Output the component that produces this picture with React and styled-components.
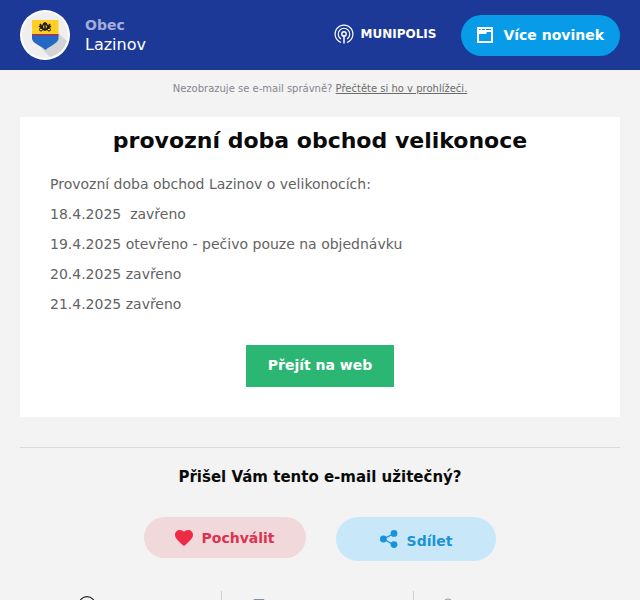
import React from "react";
import styled, { createGlobalStyle } from "styled-components";

const schedule = [
  "18.4.2025\u00a0 zavřeno",
  "19.4.2025 otevřeno - pečivo pouze na objednávku",
  "20.4.2025 zavřeno",
  "21.4.2025 zavřeno",
];

const CrestIcon = () => (
  <svg width="50" height="50" viewBox="0 0 50 50" role="img" aria-label="Lazinov">
    <circle cx="25" cy="25" r="25" fill="#fff" />
    <circle cx="25" cy="25" r="23" fill="#efefef" />
    <path d="M38 23 L47 31 A23 23 0 0 1 30 47 L22 39 Z" fill="#d3d4d6" />
    <path d="M12 10 H38.5 V25 H12 Z" fill="#ffcf24" />
    <path d="M12 25 H38.5 V29 C37 34 31 35 25.5 40 C20 35 13.5 34 12 29 Z" fill="#2468c4" />
    <path d="M12 24 H38.5 V25.5 H12 Z" fill="#b0304a" />
    <path
      d="M25 21 V12 M24 20 L20 14 M26 20 L30 14 M23 19 L19 16 M27 19 L31 16 M22 17 L24 13 M28 17 L26 13"
      stroke="#1b1a16"
      strokeWidth="1.5"
      fill="none"
    />
    <circle cx="21" cy="19.5" r="1.5" fill="none" stroke="#1b1a16" />
    <circle cx="29" cy="19.5" r="1.5" fill="none" stroke="#1b1a16" />
  </svg>
);

const SignalIcon = () => (
  <svg width="20" height="20" viewBox="0 0 20 20" fill="none" stroke="#fff" strokeWidth="1.2" aria-hidden="true">
    <path d="M7 18.4 A8.9 8.9 0 1 1 13 18.4" />
    <path d="M7 15 A5.8 5.8 0 1 1 13 15" />
    <circle cx="10" cy="10" r="2.2" strokeWidth="1.4" />
    <path d="M10 11 V19.5" strokeWidth="1.5" />
  </svg>
);

const NewsIcon = () => (
  <svg width="16" height="16" viewBox="0 0 16 16" aria-hidden="true">
    <path
      fillRule="evenodd"
      fill="#fff"
      d="M0 0 H16 V16 H0 Z M2 2 V3 H3.5 V2 Z M5 2 V3 H8 V2 Z M9 2 V3 H14 V2 Z M2 7 V14 H14 V5 H10 L9 7 Z"
    />
  </svg>
);

const HeartIcon = () => (
  <svg width="18" height="16" viewBox="0 0 18 16" aria-hidden="true">
    <path
      fill="#ed2b46"
      d="M9 16 L7.7 14.9 C3.1 10.9 0 8.2 0 4.8 C0 2.1 2.2 0 4.9 0 C6.5 0 8 .7 9 1.9 C10 .7 11.5 0 13.1 0 C15.8 0 18 2.1 18 4.8 C18 8.2 14.9 10.9 10.3 14.9 Z"
    />
  </svg>
);

const ShareIcon = () => (
  <svg width="18" height="18" viewBox="0 0 18 18" aria-hidden="true">
    <path d="M14 3.5 L3.5 9 L14 15" stroke="#1593dc" strokeWidth="1.3" fill="none" />
    <circle cx="14" cy="3.4" r="3.4" fill="#1593dc" />
    <circle cx="3.4" cy="9" r="3.4" fill="#1593dc" />
    <circle cx="14" cy="14.6" r="3.4" fill="#1593dc" />
  </svg>
);

const GlobeIcon = () => (
  <svg width="18" height="18" viewBox="0 0 18 18" fill="none" stroke="#222" aria-hidden="true">
    <circle cx="9" cy="9" r="8.3" strokeWidth="1.3" />
    <path d="M4 9 H14 M9 5 V13" />
  </svg>
);

const PhoneIcon = () => (
  <svg width="12" height="18" viewBox="0 0 12 18" fill="none" stroke="#8a8ca8" aria-hidden="true">
    <path d="M1 3.5 H11 V17 H1 Z M5 15 H7" />
  </svg>
);

const PinIcon = () => (
  <svg width="12" height="18" viewBox="0 0 12 18" fill="none" stroke="#8f9098" aria-hidden="true">
    <path d="M6 17 C3 12 1 10 1 8 A5 5 0 0 1 11 8 C11 10 9 12 6 17 Z" />
    <circle cx="6" cy="8" r="1.5" />
  </svg>
);

export default function App() {
  return (
    <>
      <GlobalStyle />
      <Header>
        <Municipality>
          <CrestIcon />
          <div>
            <Kind>Obec</Kind>
            <Name>Lazinov</Name>
          </div>
        </Municipality>
        <Brand>
          <SignalIcon />
          MUNIPOLIS
        </Brand>
        <NewsLink href="#novinky">
          <NewsIcon />
          Více novinek
        </NewsLink>
      </Header>
      <Notice>
        Nezobrazuje se e-mail správně? <a href="#prohlizec">Přečtěte si ho v prohlížeči.</a>
      </Notice>
      <Content>
        <Card>
          <Title>provozní doba obchod velikonoce</Title>
          <Message>
            <p>Provozní doba obchod Lazinov o velikonocích:</p>
            {schedule.map((line) => (
              <p key={line}>{line}</p>
            ))}
          </Message>
          <WebLink href="#web">Přejít na web</WebLink>
        </Card>
        <Feedback>
          <Question>Přišel Vám tento e-mail užitečný?</Question>
          <Actions>
            <Pill type="button" $bg="#f1d8da" $color="#dc3350" $space="31px">
              <HeartIcon />
              Pochválit
            </Pill>
            <Pill type="button" $bg="#c8e8f9" $color="#1c93d4" $space="44px" $tall>
              <ShareIcon />
              <span>Sdílet</span>
            </Pill>
          </Actions>
        </Feedback>
        <Contacts>
          <Contact $indent="58px">
            <GlobeIcon />
          </Contact>
          <Contact $indent="31px">
            <PhoneIcon />
          </Contact>
          <Contact $indent="28px">
            <PinIcon />
          </Contact>
        </Contacts>
      </Content>
    </>
  );
}

const GlobalStyle = createGlobalStyle`
  body {
    margin: 0;
    background-color: #f3f3f3;
    font-family: "DejaVu Sans", sans-serif;
    font-size: 14px;
  }
  * {
    box-sizing: border-box;
  }
  svg {
    display: block;
    flex-shrink: 0;
  }
`;

const Header = styled.header`
  display: flex;
  align-items: center;
  padding: 10px 20px;
  background-color: #1c3997;
  color: #fff;
`;

const Municipality = styled.div`
  display: flex;
  align-items: center;
  gap: 15px;
  margin-right: auto;
`;

const Kind = styled.div`
  color: #a3addb;
  font-weight: bold;
  line-height: 20px;
`;

const Name = styled.div`
  font-size: 16px;
  line-height: 20px;
`;

const Brand = styled.div`
  display: flex;
  align-items: center;
  gap: 6px;
  margin-right: 25px;
  padding-bottom: 2px;
  font-size: 12px;
  font-weight: bold;
`;

const NewsLink = styled.a`
  display: flex;
  align-items: center;
  gap: 10px;
  padding: 12px 16px;
  border-radius: 21px;
  background-color: #089ce8;
  color: #fff;
  font-weight: bold;
  line-height: 17px;
  text-decoration: none;
`;

const Notice = styled.p`
  margin: 0;
  padding: 12px 20px 22px;
  color: #85858f;
  font-size: 10px;
  line-height: 13px;
  text-align: center;
  a {
    color: #6b6b6b;
  }
`;

const Content = styled.main`
  padding: 0 20px;
`;

const Card = styled.article`
  display: flex;
  flex-direction: column;
  align-items: center;
  padding: 8px 30px 30px;
  background-color: #fff;
`;

const Title = styled.h1`
  margin: 0 0 13px;
  color: #0a0a0a;
  font-size: 22px;
  line-height: 31px;
  text-align: center;
`;

const Message = styled.div`
  align-self: stretch;
  margin-bottom: 26px;
  color: #636363;
  line-height: 30px;
  p {
    margin: 0;
  }
`;

const WebLink = styled.a`
  padding: 10px 22px 12px;
  background-color: #2bb673;
  color: #fff;
  font-weight: bold;
  line-height: 20px;
  text-decoration: none;
`;

const Feedback = styled.section`
  margin-top: 30px;
  border-top: 1px solid #dadada;
  padding: 18px 0 30px;
`;

const Question = styled.h2`
  margin: 0 0 29px;
  color: #0a0a0a;
  font-size: 15px;
  line-height: 22px;
  text-align: center;
`;

const Actions = styled.div`
  display: flex;
  align-items: flex-start;
  justify-content: center;
  gap: 30px;
`;

const Pill = styled.button`
  display: flex;
  align-items: center;
  justify-content: center;
  gap: 9px;
  height: ${({ $tall }) => ($tall ? "44px" : "41px")};
  border: none;
  border-radius: 22px;
  padding: 0 ${({ $space }) => $space};
  background-color: ${({ $bg }) => $bg};
  color: ${({ $color }) => $color};
  font: bold 14px "DejaVu Sans", sans-serif;
  cursor: pointer;
  span {
    padding-top: 4px;
  }
`;

const Contacts = styled.footer`
  display: grid;
  grid-template-columns: 201fr 192fr 207fr;
`;

const Contact = styled.div`
  padding: 5px 0 20px ${({ $indent }) => $indent};
  & + & {
    border-left: 1px solid #d0d0d0;
  }
`;
